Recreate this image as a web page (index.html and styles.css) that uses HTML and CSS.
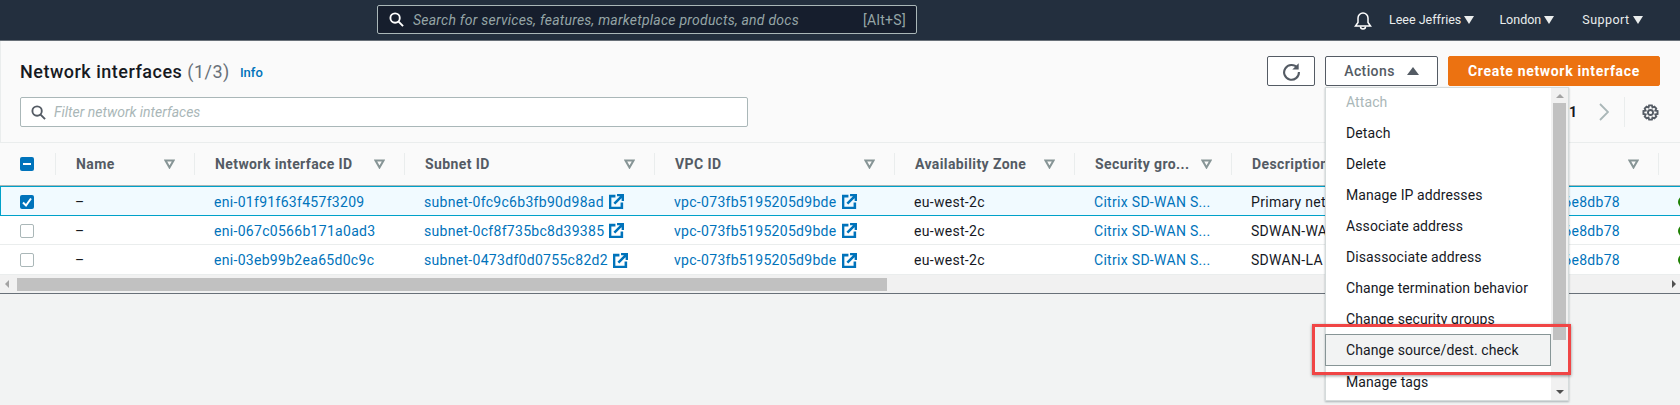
FILE: index.html
```html
<!DOCTYPE html>
<html lang="en">
<head>
  <meta charset="UTF-8">
  <title>Network interfaces</title>
  <link rel="stylesheet" href="styles.css">
</head>
<body>
  <header class="topbar">
    <div class="global-search">
      <svg class="ico-search" viewBox="0 0 16 16"><circle cx="6.5" cy="6.5" r="5" /><path d="M10.2 10.2L15 15" /></svg>
      <span class="global-search-text">Search for services, features, marketplace products, and docs</span>
      <span class="global-search-key">[Alt+S]</span>
    </div>
    <nav class="topnav">
      <svg class="ico-bell" viewBox="0 0 20 20"><path d="M2.5 16h15l-2.5-3.5V8a5 5 0 0 0-10 0v4.500z" /><path d="M7.500 16.500a2.500 2.500 0 0 0 5 0" /></svg>
      <a class="nav-user">Leee Jeffries <i class="caret-down"></i></a>
      <a class="nav-region">London <i class="caret-down"></i></a>
      <a class="nav-support">Support <i class="caret-down"></i></a>
    </nav>
  </header>

  <main class="panel">
    <div class="panel-head">
      <div class="title-row">
        <h1 class="title">Network interfaces <span class="count">(1/3)</span></h1>
        <a class="info">Info</a>
        <div class="actions">
          <button class="btn btn-icon">
            <svg class="ico-refresh" viewBox="0 0 18 18"><path d="M14.500 5.500A7 7 0 1 0 16 9.500" /><path class="fill" d="M15.800 1.200v6h-6z" /></svg>
          </button>
          <button class="btn btn-actions">Actions <i class="caret-up"></i></button>
          <button class="btn btn-primary">Create network interface</button>
        </div>
      </div>
      <div class="filter-row">
        <div class="filter">
          <svg class="ico-search" viewBox="0 0 16 16"><circle cx="6.500" cy="6.500" r="5" /><path d="M10.200 10.200L15 15" /></svg>
          <span class="filter-text">Filter network interfaces</span>
        </div>
        <div class="pager">
          <span class="pager-num">1</span>
          <svg class="ico-next" viewBox="0 0 10 18"><path d="M1 1l8 8-8 8" /></svg>
          <span class="pager-sep"></span>
          <svg class="ico-gear" viewBox="0 0 18 18"><circle cx="9" cy="9" r="2.700" /><path d="M7.500 1.500h3l.6 2.200 2-.9 2 2-1 2.100 2.400.6v3l-2.400.6 1 2.100-2 2-2-.9-.6 2.200h-3l-.6-2.200-2 .9-2-2 1-2.100-2.400-.6v-3l2.400-.6-1-2.100 2-2 2 .9z" /></svg>
        </div>
      </div>
    </div>

    <div class="table">
      <div class="row row-head">
        <div class="cell cell-check"><span class="check check-on"><svg viewBox="0 0 14 14"><path d="M3 7h8" /></svg></span></div>
        <div class="cell"><span>Name</span><svg class="sort" viewBox="0 0 11 10"><path d="M1.500 1.500h8L5.500 8.500z" /></svg></div>
        <div class="cell"><span>Network interface ID</span><svg class="sort" viewBox="0 0 11 10"><path d="M1.500 1.500h8L5.500 8.500z" /></svg></div>
        <div class="cell"><span>Subnet ID</span><svg class="sort" viewBox="0 0 11 10"><path d="M1.500 1.500h8L5.500 8.500z" /></svg></div>
        <div class="cell"><span>VPC ID</span><svg class="sort" viewBox="0 0 11 10"><path d="M1.500 1.500h8L5.500 8.500z" /></svg></div>
        <div class="cell"><span>Availability Zone</span><svg class="sort" viewBox="0 0 11 10"><path d="M1.500 1.500h8L5.500 8.500z" /></svg></div>
        <div class="cell"><span>Security gro...</span><svg class="sort" viewBox="0 0 11 10"><path d="M1.500 1.500h8L5.500 8.500z" /></svg></div>
        <div class="cell"><span>Description</span></div>
        <div class="cell cell-instance"><span></span><svg class="sort" viewBox="0 0 11 10"><path d="M1.500 1.500h8L5.500 8.500z" /></svg></div>
        <div class="cell"></div>
      </div>

      <div class="row row-selected">
        <div class="cell cell-check"><span class="check check-on"><svg viewBox="0 0 14 14"><path d="M3 7.500l3 3 5-7" /></svg></span></div>
        <div class="cell">–</div>
        <div class="cell"><a>eni-01f91f63f457f3209</a></div>
        <div class="cell"><a>subnet-0fc9c6b3fb90d98ad</a><svg class="ico-ext" viewBox="0 0 14 14"><path d="M6 2H1v11h11V8" /><path d="M5 9l7-7M7.500 1H13v5.500" /></svg></div>
        <div class="cell"><a>vpc-073fb5195205d9bde</a><svg class="ico-ext" viewBox="0 0 14 14"><path d="M6 2H1v11h11V8" /><path d="M5 9l7-7M7.500 1H13v5.500" /></svg></div>
        <div class="cell">eu-west-2c</div>
        <div class="cell"><a>Citrix SD-WAN S...</a></div>
        <div class="cell">Primary net</div>
        <div class="cell cell-instance"><a>6e8db78</a></div>
        <div class="cell"><i class="status"></i></div>
      </div>

      <div class="row">
        <div class="cell cell-check"><span class="check"></span></div>
        <div class="cell">–</div>
        <div class="cell"><a>eni-067c0566b171a0ad3</a></div>
        <div class="cell"><a>subnet-0cf8f735bc8d39385</a><svg class="ico-ext" viewBox="0 0 14 14"><path d="M6 2H1v11h11V8" /><path d="M5 9l7-7M7.500 1H13v5.500" /></svg></div>
        <div class="cell"><a>vpc-073fb5195205d9bde</a><svg class="ico-ext" viewBox="0 0 14 14"><path d="M6 2H1v11h11V8" /><path d="M5 9l7-7M7.500 1H13v5.500" /></svg></div>
        <div class="cell">eu-west-2c</div>
        <div class="cell"><a>Citrix SD-WAN S...</a></div>
        <div class="cell">SDWAN-WA</div>
        <div class="cell cell-instance"><a>6e8db78</a></div>
        <div class="cell"><i class="status"></i></div>
      </div>

      <div class="row">
        <div class="cell cell-check"><span class="check"></span></div>
        <div class="cell">–</div>
        <div class="cell"><a>eni-03eb99b2ea65d0c9c</a></div>
        <div class="cell"><a>subnet-0473df0d0755c82d2</a><svg class="ico-ext" viewBox="0 0 14 14"><path d="M6 2H1v11h11V8" /><path d="M5 9l7-7M7.500 1H13v5.500" /></svg></div>
        <div class="cell"><a>vpc-073fb5195205d9bde</a><svg class="ico-ext" viewBox="0 0 14 14"><path d="M6 2H1v11h11V8" /><path d="M5 9l7-7M7.500 1H13v5.500" /></svg></div>
        <div class="cell">eu-west-2c</div>
        <div class="cell"><a>Citrix SD-WAN S...</a></div>
        <div class="cell">SDWAN-LA</div>
        <div class="cell cell-instance"><a>6e8db78</a></div>
        <div class="cell"><i class="status"></i></div>
      </div>

      <div class="hscroll">
        <i class="arrow-left"></i>
        <div class="hscroll-track"><div class="hscroll-thumb"></div></div>
        <i class="arrow-right"></i>
      </div>
    </div>
  </main>

  <div class="menu">
    <ul class="menu-list">
      <li class="menu-item menu-disabled">Attach</li>
      <li class="menu-item">Detach</li>
      <li class="menu-item">Delete</li>
      <li class="menu-item">Manage IP addresses</li>
      <li class="menu-item">Associate address</li>
      <li class="menu-item">Disassociate address</li>
      <li class="menu-item">Change termination behavior</li>
      <li class="menu-item">Change security groups</li>
      <li class="menu-item menu-hover">Change source/dest. check</li>
      <li class="menu-item">Manage tags</li>
    </ul>
    <div class="vscroll">
      <i class="arrow-up"></i>
      <div class="vscroll-track"><div class="vscroll-thumb"></div></div>
      <i class="arrow-down"></i>
    </div>
  </div>

  <div class="callout"></div>
</body>
</html>
```

FILE: styles.css
```css
* {
  box-sizing: border-box;
}

html, body {
  margin: 0;
  height: 405px;
  overflow: hidden;
}

body {
  font-family: Roboto, "Liberation Sans", sans-serif;
  font-size: 14px;
  color: #16191f;
  background-color: #f2f3f3;
  position: relative;
}

/* top bar */
.topbar {
  height: 41px;
  background-color: #232f3e;
  border-bottom: 1px solid #687078;
  display: flex;
  align-items: center;
  padding-left: 377px;
}

.global-search {
  width: 540px;
  height: 29px;
  margin-top: -1px;
  border: 1px solid #aab7b8;
  border-radius: 2px;
  background-color: #161e2d;
  display: flex;
  align-items: center;
  padding: 0 10px 0 11px;
}

.ico-search {
  width: 15px;
  height: 15px;
  fill: none;
  stroke: #fff;
  stroke-width: 2;
  flex: none;
}

.global-search-text {
  margin-left: 9px;
  font-style: italic;
  color: #95a5a6;
  letter-spacing: 0.24px;
}

.global-search-key {
  margin-left: auto;
  color: #95a5a6;
  letter-spacing: 0.3px;
}

.topnav {
  display: flex;
  align-items: center;
  color: #eaeded;
  font-size: 12.500px;
  margin-left: 436px;
  margin-top: -1px;
}

.ico-bell {
  width: 20px;
  height: 20px;
  fill: none;
  stroke: #fff;
  stroke-width: 1.500;
}

.nav-user {
  margin-left: 16px;
}

.nav-region {
  margin-left: 25px;
}

.nav-support {
  margin-left: 28px;
  letter-spacing: 0.45px;
}

.caret-down {
  display: inline-block;
  border-left: 5px solid transparent;
  border-right: 5px solid transparent;
  border-top: 8px solid #eaeded;
}

/* panel head */
.panel-head {
  height: 101px;
  background-color: #fafafa;
  border-left: 1px solid #eaeded;
  padding: 15px 20px 0 19px;
}

.title-row {
  display: flex;
  align-items: center;
  height: 30px;
}

.title {
  margin: 0;
  font-size: 18px;
  font-weight: 500;
  letter-spacing: 0.5px;
  color: #16191f;
}

.count {
  font-weight: 400;
  color: #687078;
}

.info {
  margin-left: 10px;
  margin-top: 3px;
  font-size: 13px;
  font-weight: 500;
  color: #0073bb;
}

.actions {
  margin-left: auto;
  display: flex;
  gap: 10px;
}

.btn {
  height: 30px;
  border: 1px solid #545b64;
  border-radius: 2px;
  background-color: #fff;
  color: #545b64;
  font: 500 14px Roboto, "Liberation Sans", sans-serif;
  display: flex;
  align-items: center;
  justify-content: center;
  padding: 0;
}

.btn-icon {
  width: 48px;
}

.ico-refresh {
  width: 19px;
  height: 19px;
  fill: none;
  stroke: #545b64;
  stroke-width: 2;
}

.ico-refresh .fill {
  fill: #545b64;
  stroke: none;
}

.btn-actions {
  width: 113px;
  letter-spacing: 0.4px;
}

.caret-up {
  display: inline-block;
  margin-left: 12px;
  border-left: 6px solid transparent;
  border-right: 6px solid transparent;
  border-bottom: 8px solid #545b64;
}

.btn-primary {
  width: 212px;
  background-color: #ec7211;
  border-color: #ec7211;
  color: #fff;
  font-weight: 700;
  letter-spacing: 0.67px;
}

.filter-row {
  display: flex;
  align-items: center;
  justify-content: space-between;
  margin-top: 11px;
  height: 30px;
}

.filter {
  width: 728px;
  height: 30px;
  border: 1px solid #aab7b8;
  border-radius: 2px;
  background-color: #fff;
  display: flex;
  align-items: center;
  padding-left: 10px;
}

.filter .ico-search {
  stroke: #545b64;
}

.filter-text {
  margin-left: 8px;
  font-style: italic;
  color: #aab7b8;
}

.pager {
  display: flex;
  align-items: center;
  padding-right: 1px;
}

.pager-num {
  font-weight: 700;
  color: #16191f;
}

.ico-next {
  width: 10px;
  height: 18px;
  margin-left: 22px;
  fill: none;
  stroke: #aab7b8;
  stroke-width: 1.800;
}

.pager-sep {
  width: 1px;
  height: 30px;
  margin-left: 15px;
  background-color: #eaeded;
}

.ico-gear {
  width: 17px;
  height: 17px;
  margin-left: 17px;
  fill: none;
  stroke: #545b64;
  stroke-width: 2;
}

/* table */
.table {
  overflow: hidden;
}

.row {
  display: grid;
  grid-template-columns: 55px 139px 210px 250px 240px 180px 157px 198px 229px 22px;
  height: 30px;
  background-color: #fff;
  border-bottom: 1px solid #eaeded;
  align-items: center;
}

.row-head {
  height: 44px;
  background-color: #fafafa;
  border-top: 1px solid #eaeded;
  border-bottom: 1px solid #aab7b8;
  font-weight: 700;
  color: #545b64;
}

.row-selected {
  height: 30px;
  background-color: #f1faff;
  border-top: 1px solid #00a1c9;
  border-bottom: 1px solid #00a1c9;
  box-shadow: inset 1px 0 0 #00a1c9;
}

.row-selected + .row {
  height: 29px;
}

.cell {
  padding-left: 20px;
  padding-top: 1px;
  white-space: nowrap;
  display: flex;
  align-items: center;
  overflow: hidden;
  letter-spacing: 0.3px;
}

.row-head .cell {
  height: 22px;
  padding-top: 0;
  padding-left: 20px;
  padding-right: 19px;
  justify-content: space-between;
  border-left: 1px solid #eaeded;
  letter-spacing: 0.4px;
}

.row-head .cell-check {
  border-left: none;
}

.cell-instance {
  justify-content: flex-end;
  padding-right: 38px;
}

.cell a {
  color: #0073bb;
}

.check {
  width: 14px;
  height: 14px;
  border: 1px solid #aab7b8;
  border-radius: 2px;
  background-color: #fff;
  display: block;
}

.check-on {
  border: none;
  background-color: #0073bb;
}

.check svg {
  display: block;
  fill: none;
  stroke: #fff;
  stroke-width: 2;
}

.sort {
  flex: none;
  width: 11px;
  height: 10px;
  fill: #fafafa;
  stroke: #879596;
  stroke-width: 2;
}

.ico-ext {
  width: 15px;
  height: 15px;
  flex: none;
  margin-left: 5px;
  fill: none;
  stroke: #0073bb;
  stroke-width: 2.400;
}

.status {
  width: 12px;
  height: 12px;
  flex: none;
  border-radius: 50%;
  background-color: #1d8102;
}

.hscroll {
  height: 19px;
  background-color: #f1f1f1;
  border-bottom: 1px solid #687078;
  display: flex;
  align-items: center;
}

.hscroll-track {
  flex: 1;
  height: 13px;
  padding-left: 8px;
}

.hscroll-thumb {
  width: 870px;
  height: 13px;
  background-color: #c1c1c1;
}

.arrow-left {
  margin-left: 5px;
  border-top: 4px solid transparent;
  border-bottom: 4px solid transparent;
  border-right: 4px solid #a3a3a3;
}

.arrow-right {
  margin-right: 4px;
  border-top: 4px solid transparent;
  border-bottom: 4px solid transparent;
  border-left: 4px solid #505050;
}

/* actions dropdown */
.menu {
  position: absolute;
  left: 1325px;
  top: 87px;
  width: 244px;
  height: 314px;
  background-color: #fff;
  border: 1px solid #d5dbdb;
  box-shadow: 0 1px 2px rgba(0, 28, 36, 0.3);
  display: flex;
}

.menu-list {
  list-style: none;
  margin: 0;
  padding: 0;
  flex: 1;
}

.menu-item {
  height: 31px;
  padding-left: 20px;
  display: flex;
  align-items: center;
  letter-spacing: 0.1px;
  color: #16191f;
}

.menu-disabled {
  height: 29px;
  padding-bottom: 1px;
  color: #aab7b8;
}

.menu-hover {
  height: 32px;
  margin-left: -1px;
  background-color: #f2f3f3;
  border: 1px solid #879596;
}

.vscroll {
  width: 17px;
  display: flex;
  flex-direction: column;
  align-items: center;
  background-color: #f1f1f1;
}

.vscroll-track {
  flex: 1;
  width: 100%;
}

.vscroll-thumb {
  width: 13px;
  height: 237px;
  margin: 5px auto 0;
  background-color: #c1c1c1;
}

.arrow-up {
  margin-top: 6px;
  border-left: 4px solid transparent;
  border-right: 4px solid transparent;
  border-bottom: 4px solid #a3a3a3;
}

.arrow-down {
  margin-bottom: 6px;
  border-left: 4px solid transparent;
  border-right: 4px solid transparent;
  border-top: 4px solid #505050;
}

/* red annotation box */
.callout {
  position: absolute;
  left: 1312px;
  top: 324px;
  width: 259px;
  height: 51px;
  border: 3px solid #f04545;
  box-shadow: 0 1px 3px rgba(0, 0, 0, 0.4);
}
```
